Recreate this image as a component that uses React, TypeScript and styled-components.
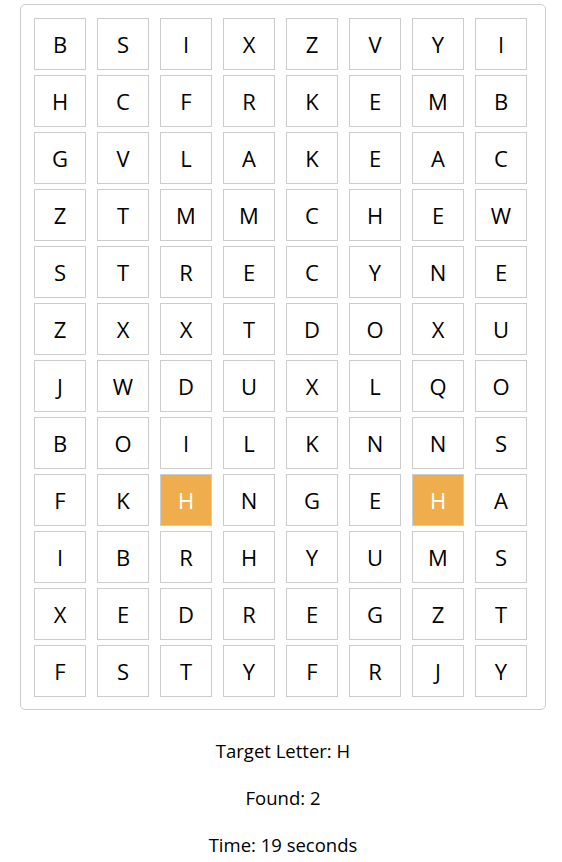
import styled, { createGlobalStyle } from "styled-components";

const GlobalStyle = createGlobalStyle`
  body {
    margin: 0;
    background: #ffffff;
    font-family: "Open Sans", "Noto Sans", sans-serif;
    color: #000000;
  }
`;

const Page = styled.div`
  width: 562px;
  padding-top: 4px;
`;

const Board = styled.div`
  box-sizing: border-box;
  width: 526px;
  margin-left: 20px;
  padding: 13px 18px 12px 13px;
  border: 1px solid #cccccc;
  border-radius: 5px;
  display: grid;
  grid-template-columns: repeat(8, 52px);
  grid-auto-rows: 52px;
  column-gap: 11px;
  row-gap: 5px;
`;

const Cell = styled.div<{ $found: boolean }>`
  box-sizing: border-box;
  display: flex;
  align-items: center;
  justify-content: center;
  border: 1px solid #cccccc;
  background: ${({ $found }) => ($found ? "#f0ad4e" : "#ffffff")};
  color: ${({ $found }) => ($found ? "#ffffff" : "#000000")};
  font-size: 22px;
`;

const Info = styled.div`
  width: 526px;
  margin-left: 20px;
  padding-top: 27px;
  display: flex;
  flex-direction: column;
  align-items: center;
  gap: 20px;
`;

const Line = styled.p`
  margin: 0;
  font-size: 18.5px;
  line-height: 27px;
`;

const rows = [
  "BSIXZVYI",
  "HCFRKEMB",
  "GVLAKEAC",
  "ZTMMCHEW",
  "STRECYNE",
  "ZXXTDOXU",
  "JWDUXLQO",
  "BOILKNNS",
  "FKHNGEHA",
  "IBRHYUMS",
  "XEDREGZT",
  "FSTYFRJY",
];

const found = new Set(["8-2", "8-6"]);

export default function App() {
  return (
    <Page>
      <GlobalStyle />
      <Board>
        {rows.map((row, r) =>
          row.split("").map((ch, c) => (
            <Cell key={`${r}-${c}`} $found={found.has(`${r}-${c}`)}>
              {ch}
            </Cell>
          ))
        )}
      </Board>
      <Info>
        <Line>Target Letter: H</Line>
        <Line>Found: 2</Line>
        <Line>Time: 19 seconds</Line>
      </Info>
    </Page>
  );
}
